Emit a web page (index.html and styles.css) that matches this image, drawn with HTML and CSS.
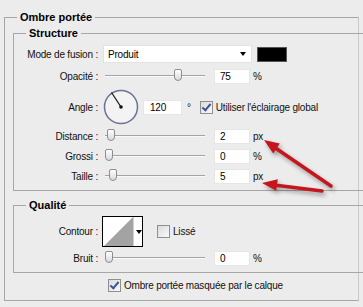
FILE: index.html
```html
<html>
<head>
    <title>Ombre portée</title>
    <link rel="stylesheet" href="styles.css">
</head>
<body>
    <fieldset class="panel">
        <legend class="panel-title">Ombre portée</legend>

        <fieldset class="group">
            <legend class="group-title">Structure</legend>

            <div class="row row-mode">
                <label class="field-label">Mode de fusion :</label>
                <div class="select">
                    <span>Produit</span>
                    <span class="select-arrow"></span>
                </div>
                <div class="swatch"></div>
            </div>

            <div class="row row-wide">
                <label class="field-label">Opacité :</label>
                <div class="slider"><div class="thumb" style="left: 69px"></div></div>
                <div class="num">75</div>
                <span class="unit">%</span>
            </div>

            <div class="row row-angle">
                <label class="field-label">Angle :</label>
                <svg class="dial" width="36" height="36" viewBox="0 0 36 36">
                    <circle cx="18" cy="18" r="16.5" fill="#f3f3f3" stroke="#6b7294" stroke-width="1.5"/>
                    <line x1="18" y1="18" x2="8.5" y2="3.5" stroke="#111" stroke-width="1.2"/>
                    <circle cx="18" cy="18" r="1.8" fill="#111"/>
                </svg>
                <div class="num num-angle">120</div>
                <span class="unit unit-deg">°</span>
                <span class="check checked"></span>
                <span class="check-text">Utiliser l'éclairage global</span>
            </div>

            <div class="row">
                <label class="field-label">Distance :</label>
                <div class="slider"><div class="thumb" style="left: 2px"></div></div>
                <div class="num">2</div>
                <span class="unit">px</span>
            </div>

            <div class="row">
                <label class="field-label">Grossi :</label>
                <div class="slider"><div class="thumb" style="left: 0px"></div></div>
                <div class="num">0</div>
                <span class="unit">%</span>
            </div>

            <div class="row">
                <label class="field-label">Taille :</label>
                <div class="slider"><div class="thumb" style="left: 4px"></div></div>
                <div class="num">5</div>
                <span class="unit">px</span>
            </div>
        </fieldset>

        <fieldset class="group group-quality">
            <legend class="group-title">Qualité</legend>

            <div class="row row-contour">
                <label class="field-label">Contour :</label>
                <div class="contour">
                    <svg width="30" height="29" viewBox="0 0 30 29">
                        <rect width="30" height="29" fill="#fff"/>
                        <polygon points="1,29 30,0 30,29" fill="#a3a3a3"/>
                    </svg>
                    <span class="contour-arrow"></span>
                </div>
                <span class="check"></span>
                <span class="check-text">Lissé</span>
            </div>

            <div class="row">
                <label class="field-label">Bruit :</label>
                <div class="slider"><div class="thumb" style="left: 0px"></div></div>
                <div class="num">0</div>
                <span class="unit">%</span>
            </div>
        </fieldset>

        <div class="row row-knockout">
            <span class="check checked"></span>
            <span class="check-text">Ombre portée masquée par le calque</span>
        </div>
    </fieldset>

    <svg class="arrows" width="363" height="307" viewBox="0 0 363 307">
        <line x1="331" y1="186" x2="274" y2="147" stroke="#c4161c" stroke-width="3.5" stroke-linecap="round"/>
        <polygon points="264,140 279.8,143.6 273.2,153.4" fill="#c4161c"/>
        <line x1="322" y1="191" x2="274" y2="185" stroke="#c4161c" stroke-width="3.5" stroke-linecap="round"/>
        <polygon points="262,183 277.8,179.2 276.2,190.8" fill="#c4161c"/>
    </svg>
</body>
</html>
```

FILE: styles.css
```css
body {
    margin: 0;
    padding: 11px 0 0 4px;
    background-color: #ececec;
    color: #111;
    font-family: "Liberation Sans", Arial, sans-serif;
    font-size: 10px;
    letter-spacing: -0.2px;
    position: relative;
    overflow: hidden;
    height: 307px;
    box-sizing: border-box;
}

.panel {
    margin: 0;
    padding: 0 0 6px 0;
    width: 355px;
    box-sizing: border-box;
    border: 1px solid #a7a7a7;
    border-right-color: #c9c9c9;
    min-width: 0;
}

.panel-title,
.group-title {
    margin-left: 12px;
    padding: 0 3px;
    font-size: 11px;
    font-weight: bold;
    letter-spacing: 0;
    line-height: 13px;
    color: #000;
}

.group {
    margin: 3px -12px 0 8px;
    padding: 5px 0 5px 0;
    border: 1px solid #a7a7a7;
    min-width: 0;
}

.group-quality {
    margin-top: 8px;
    padding-top: 4px;
}

.row {
    display: flex;
    align-items: center;
    height: 18px;
    margin-top: 2px;
}

.row-mode {
    margin-top: 0;
}

.row-wide {
    height: 22px;
}

.row-angle {
    height: 36px;
}

.row-contour {
    height: 31px;
    margin-top: 0;
    margin-bottom: 1px;
}

.row-knockout {
    margin: 3px 0 0 103px;
}

.field-label {
    width: 84px;
    text-align: right;
    margin-right: 5px;
    flex-shrink: 0;
}

.select {
    width: 149px;
    height: 18px;
    box-sizing: border-box;
    background-color: #fff;
    border: 1px solid #e2e2e2;
    display: flex;
    align-items: center;
    justify-content: space-between;
    padding: 0 5px 0 4px;
    color: #000;
}

.select-arrow,
.contour-arrow {
    width: 0;
    height: 0;
    border-left: 3.5px solid transparent;
    border-right: 3.5px solid transparent;
    border-top: 4px solid #000;
}

.swatch {
    width: 30px;
    height: 15px;
    margin-left: 5px;
    background-color: #000;
    border: 1px solid #555;
    box-sizing: border-box;
}

.slider {
    position: relative;
    width: 100px;
    height: 1px;
    margin-left: 2px;
    background-color: #a3a3a3;
    border-bottom: 1px solid #fafafa;
}

.thumb {
    position: absolute;
    top: -6px;
    width: 8px;
    height: 12px;
    box-sizing: border-box;
    border: 1px solid #8d8d8d;
    border-radius: 2px 2px 4px 4px;
    background: linear-gradient(#ffffff, #d9d9d9);
}

.num {
    width: 36px;
    height: 15px;
    box-sizing: border-box;
    margin-left: 9px;
    padding-left: 5px;
    line-height: 14px;
    background-color: #fff;
    border: 1px solid #e6e6e6;
    color: #000;
}

.unit {
    margin-left: 3px;
}

.dial {
    flex-shrink: 0;
}

.num-angle {
    width: 39px;
    margin-left: 4px;
    padding-left: 6px;
}

.unit-deg {
    margin-left: 5px;
    margin-right: 9px;
}

.check {
    width: 13px;
    height: 13px;
    box-sizing: border-box;
    border: 1px solid #8e8f8f;
    background: linear-gradient(135deg, #dcdcdc, #f8f8f8);
    position: relative;
    flex-shrink: 0;
}

.check.checked::after {
    content: "";
    position: absolute;
    left: 3px;
    top: 0px;
    width: 3px;
    height: 7px;
    border-right: 2px solid #3d5595;
    border-bottom: 2px solid #3d5595;
    transform: rotate(40deg);
}

.check-text {
    margin-left: 3px;
    color: #111;
}

.contour {
    width: 41px;
    height: 31px;
    box-sizing: border-box;
    border: 1px solid #000;
    background-color: #fff;
    display: flex;
    align-items: center;
    margin-left: -1px;
    margin-right: 14px;
}

.contour svg {
    border-right: 1px solid #d0d0d0;
}

.contour-arrow {
    margin-left: 2px;
}

.arrows {
    position: absolute;
    top: 0;
    left: 0;
    pointer-events: none;
    filter: drop-shadow(2px 3px 2px rgba(0, 0, 0, 0.35));
}
```
